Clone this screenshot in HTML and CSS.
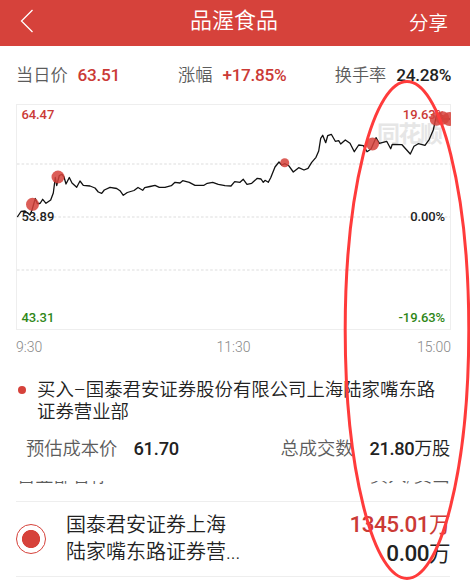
FILE: index.html
```html
<!DOCTYPE html>
<html lang="zh-CN">
  <head>
    <meta charset="UTF-8" />
    <title>品渥食品</title>
    <link rel="stylesheet" href="styles.css">
  </head>
  <body>
    <div class="page">
      <header class="header">
        <svg class="back" viewBox="0 0 14 24" aria-label="返回">
          <path d="M12.5 1L1.5 12L12.5 23" />
        </svg>
        <h1>品渥食品</h1>
        <span class="share">分享</span>
      </header>

      <div class="stats">
        <div class="stat"><span>当日价</span><b class="num up">63.51</b></div>
        <div class="stat"><span>涨幅</span><b class="num up">+17.85%</b></div>
        <div class="stat"><span>换手率</span><b class="num">24.28%</b></div>
      </div>

      <div class="chart">
        <svg viewBox="16 104 435 226">
          <rect class="frame" x="16.5" y="104.5" width="434" height="225" />
          <path class="grid" d="M17 164H450M17 217H450M17 270H450" />
          <text class="watermark" x="377" y="142" textLength="66">同花顺</text>
          <path class="price" d="M17.3 217L21 211.5L25 211L30 215L32 210L35.3 198.5L37.3 203.5H40L42.7 199.3L46 203.3L50.7 200L53.3 193L55.3 177.5L56.7 185.5L59.3 175.5L62 174.3L64 177L66 184L69.3 177.5L72 183L76.7 187.3L80 181L83.3 185.3L90 186L95 188L98.3 192L101.7 193.3L104.3 190L110 187.3L116.7 188.5L120 190.7L123.3 195.3L127.3 192.5L134 190.5L138 187.5L142.7 190.3L144.7 187.7L150 186.5L155 185.3L159.3 187.3H165L171.3 185.7L175 182.3L180 183L182.7 180.7L189.3 182.3L195 185.3H204L207.3 183.3L212.7 182.3L218.3 184.3L225 185.7L231 186L234.7 181.7L240 182.3L243.3 179.3L247 184.3L251.7 183.3L257.3 178.3L261 179L263.3 182.3L265 180.3L268.3 182.3L270.7 177.7L275 167L279 162L281.7 165L285 163.7L288.7 165.7L293.3 172L298.7 167.7L304 170L308 168.3L311.7 162.3L316 157.3L318.7 151L320.7 138.3L322.7 135.3L325.7 142.7L327.7 135.7L331.3 134.3L335.3 141.3L338.7 140.7L340.7 144L345.3 140L350 143.3L354.3 151.7L358.7 145L363.3 145.7L367 151.7L371 149L376 137.7L379.3 143.3L386.7 141.3L390.7 148.7L392.3 144.3L402 144.7L406.7 150L410.3 154L414 146.3L418.3 143.7L425 145.3L429.3 139.3L433.3 130L436.7 114.3L440 113L443 119H450" />
          <g class="marks">
            <circle cx="32.5" cy="204.3" r="6.5" />
            <circle cx="58" cy="177" r="6.5" />
            <circle cx="284.7" cy="162.7" r="4.5" />
            <circle cx="372.5" cy="144" r="6.5" />
          </g>
          <g class="labels">
            <text class="red" x="21.5" y="119">64.47</text>
            <text x="21.5" y="220.5">53.89</text>
            <text class="green" x="21.5" y="321.5">43.31</text>
            <text class="red end" x="445" y="119">19.63%</text>
            <text class="end" x="445" y="220.5">0.00%</text>
            <text class="green end" x="445" y="321.5">-19.63%</text>
          </g>
          <g class="marks">
            <circle cx="436.5" cy="119" r="6.8" />
            <circle cx="442.5" cy="118" r="6.8" />
            <circle cx="449.5" cy="119" r="7" />
          </g>
        </svg>
        <div class="times"><span>9:30</span><span>11:30</span><span>15:00</span></div>
      </div>

      <div class="deal">
        <i class="dot"></i>
        <p>买入–国泰君安证券股份有限公司上海陆家嘴东路<br>证券营业部</p>
      </div>
      <div class="summary">
        <div><span>预估成本价</span><b class="num">61.70</b></div>
        <div><span>总成交数</span><b class="num volume">21.80<em>万股</em></b></div>
      </div>

      <div class="table-head">
        <span>营业部名称</span><span>买入/卖出</span>
      </div>
      <div class="broker">
        <i class="radio"></i>
        <p>国泰君安证券上海<br>陆家嘴东路证券营...</p>
        <div class="amounts">
          <div class="num up">1345.01<em>万</em></div>
          <div class="num">0.00<em>万</em></div>
        </div>
      </div>

      <!-- hand-drawn highlight round the right side -->
      <svg class="highlight" viewBox="0 0 470 580">
        <ellipse cx="407" cy="330" rx="61.8" ry="248.5" />
      </svg>
    </div>
  </body>
</html>
```
FILE: styles.css
```css
:root {
  --red: #d6423b;
  --up: #cb3a36;
  --text: #222;
  --muted: #5c5c5c;
  --line: #eee;
}

* {
  box-sizing: border-box;
}

body {
  margin: 0;
  background: #fff;
  color: var(--text);
  font-family: Roboto, "Noto Sans CJK SC", sans-serif;
  font-weight: 350;
}

h1,
p {
  margin: 0;
  font-weight: 350;
}

em,
i {
  font-style: normal;
}

.page {
  position: relative;
  width: 470px;
  height: 580px;
  overflow: hidden;
}

.header {
  display: grid;
  grid-template-columns: 1fr auto 1fr;
  align-items: center;
  height: 46px;
  padding: 0 22px 4px 20px;
  background: var(--red);
  color: #fff;
}

.header h1 {
  font-size: 22px;
  line-height: 30px;
}

.back {
  width: 14px;
  height: 24px;
  fill: none;
  stroke: #fff;
  stroke-width: 1.3;
}

.share {
  justify-self: end;
  font-size: 19.5px;
}

.stats {
  display: grid;
  grid-template-columns: 162px 1fr auto;
  align-items: center;
  height: 58px;
  padding: 0 19px 4px 16px;
}

.stat {
  display: flex;
  align-items: baseline;
  gap: 10px;
  color: var(--muted);
  font-size: 17.2px;
}

.num {
  color: var(--text);
  font-weight: 500;
}

.num em {
  font-weight: 350;
}

.stat .num {
  letter-spacing: -0.3px;
}

.num.up {
  color: var(--up);
}

.chart {
  padding: 0 19px 0 16px;
}

.chart svg {
  display: block;
  width: 435px;
  height: 226px;
}

.frame {
  fill: none;
  stroke: var(--line);
}

.grid {
  fill: none;
  stroke: #ddd;
  stroke-dasharray: 2.6 2;
}

.watermark {
  fill: #e6e6e6;
  font-size: 23px;
  font-weight: 700;
}

.price {
  fill: none;
  stroke: #111;
  stroke-width: 1.3;
  stroke-linejoin: round;
}

.marks {
  fill: var(--red);
  fill-opacity: 0.85;
}

.labels {
  fill: var(--text);
  font-size: 13px;
  font-weight: 500;
  letter-spacing: -0.1px;
}

.labels .red {
  fill: var(--up);
}

.labels .green {
  fill: #2f8718;
}

.labels .end {
  text-anchor: end;
}

.times {
  display: grid;
  grid-template-columns: 1fr auto 1fr;
  height: 45px;
  padding-top: 8px;
  color: #888;
  font-size: 14px;
  line-height: 18px;
}

.times span:last-child {
  text-align: right;
}

.deal {
  display: flex;
  gap: 11px;
  height: 55px;
  padding: 4px 0 0 18px;
  font-size: 18.4px;
  line-height: 22px;
  white-space: nowrap;
}

.dot {
  width: 8px;
  height: 8px;
  margin-top: 7px;
  border-radius: 50%;
  background: var(--red);
}

.summary {
  display: flex;
  justify-content: space-between;
  align-items: center;
  height: 44px;
  padding: 0 20px 10px 26px;
  color: var(--muted);
  font-size: 18.3px;
}

.summary .num {
  margin-left: 16px;
  letter-spacing: -0.2px;
}

.summary .volume {
  letter-spacing: -0.4px;
}

/* scrolled under the summary, only the lower strip of the labels shows */
.table-head {
  display: flex;
  justify-content: space-between;
  align-items: flex-end;
  height: 6px;
  margin-top: 7px;
  padding: 0 20px 0 17px;
  overflow: hidden;
  color: var(--muted);
  font-size: 18.2px;
  line-height: 22px;
}

.broker {
  display: flex;
  align-items: center;
  height: 76px;
  margin: 14px 20px 0 16px;
  border-top: 1px solid var(--line);
  border-bottom: 1px solid var(--line);
}

.broker p {
  margin-left: 20px;
  font-size: 20px;
  line-height: 27px;
}

.radio {
  width: 30px;
  height: 30px;
  border: 1px solid var(--red);
  border-radius: 50%;
  background: radial-gradient(circle, var(--red) 8.7px, #fff 9.4px);
}

.amounts {
  margin-left: auto;
  font-size: 22.5px;
  line-height: 28px;
  letter-spacing: -0.5px;
  text-align: right;
}

.amounts em {
  font-size: 21.5px;
  font-weight: 400;
}

.highlight {
  position: absolute;
  top: 0;
  left: 0;
  width: 470px;
  height: 580px;
  fill: none;
  stroke: #ff3b3b;
  stroke-width: 3;
}
```
